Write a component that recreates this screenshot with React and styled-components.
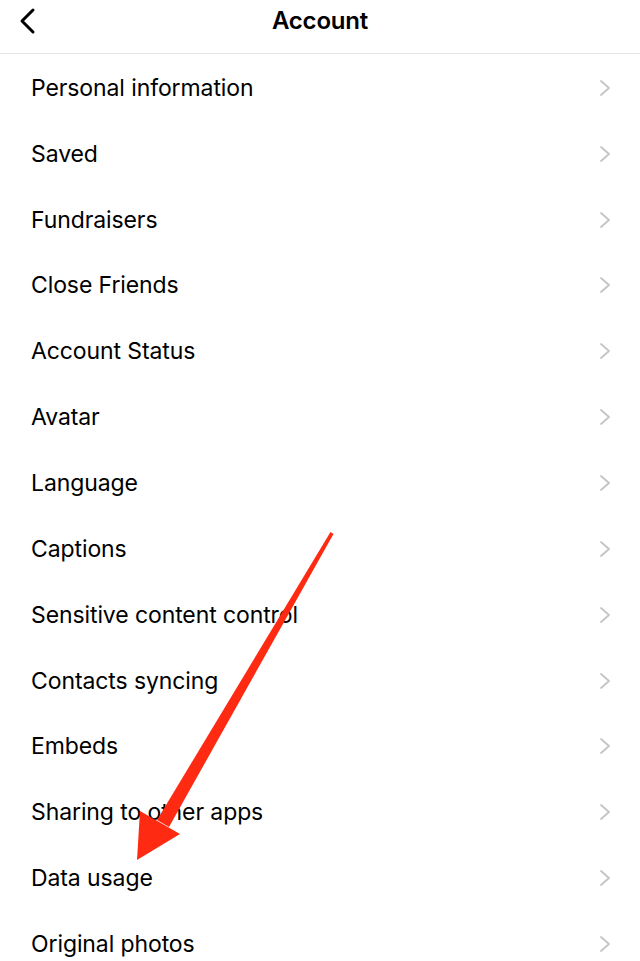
import React from 'react'
import styled, { createGlobalStyle } from 'styled-components'

const Global = createGlobalStyle`
  html, body {
    margin: 0;
    padding: 0;
    background: #fff;
    overflow: hidden;
  }
  body {
    font-family: Inter, "Liberation Sans", Arial, sans-serif;
    color: #000;
  }
`

const Screen = styled.div`
  position: relative;
  width: 640px;
  height: 961px;
  overflow: hidden;
  background: #fff;
`

const Header = styled.header`
  display: flex;
  align-items: center;
  justify-content: center;
  position: relative;
  height: 53px;
  border-bottom: 1px solid #e6e6e6;
  box-sizing: content-box;
`

const BackButton = styled.button`
  position: absolute;
  left: 14px;
  top: 5px;
  width: 28px;
  height: 32px;
  padding: 0;
  border: 0;
  background: none;
  display: flex;
  align-items: center;
  justify-content: center;
`

const Title = styled.h1`
  margin: 0 0 12px;
  font-size: 24px;
  font-weight: 600;
  letter-spacing: -0.2px;
`

const List = styled.ul`
  list-style: none;
  margin: 0;
  padding: 1px 0 0;
`

const Row = styled.li`
  display: flex;
  align-items: center;
  justify-content: space-between;
  height: 65.85px;
  padding: 0 28px 0 31px;
  font-size: 23px;
  letter-spacing: -0.1px;
`

const Chevron = () => (
  <svg width="14" height="18" viewBox="0 0 14 18">
    <path d="M3 2 L11 9 L3 16" fill="none" stroke="#c4c4c4" strokeWidth="1.8" strokeLinecap="round" strokeLinejoin="round" />
  </svg>
)

const Arrow = styled.svg`
  position: absolute;
  left: 0;
  top: 0;
  pointer-events: none;
`

const items = [
  'Personal information',
  'Saved',
  'Fundraisers',
  'Close Friends',
  'Account Status',
  'Avatar',
  'Language',
  'Captions',
  'Sensitive content control',
  'Contacts syncing',
  'Embeds',
  'Sharing to other apps',
  'Data usage',
  'Original photos',
]

export default function App() {
  return (
    <Screen>
      <Global />
      <Header>
        <BackButton aria-label="Back">
          <svg width="22" height="28" viewBox="0 0 22 28">
            <path d="M16 3 L5 14 L16 25" fill="none" stroke="#000" strokeWidth="3" strokeLinecap="round" strokeLinejoin="round" />
          </svg>
        </BackButton>
        <Title>Account</Title>
      </Header>
      <List>
        {items.map((t) => (
          <Row key={t}>
            <span>{t}</span>
            <Chevron />
          </Row>
        ))}
      </List>
      <Arrow width="640" height="961" viewBox="0 0 640 961">
        <path d="M330.5 532 L333.5 534 L169 827 L157 820 Z" fill="#ff2a12" strokeLinejoin="round" />
        <path d="M140 811 L180 834 L137 860 Z" fill="#ff2a12" />
      </Arrow>
    </Screen>
  )
}
